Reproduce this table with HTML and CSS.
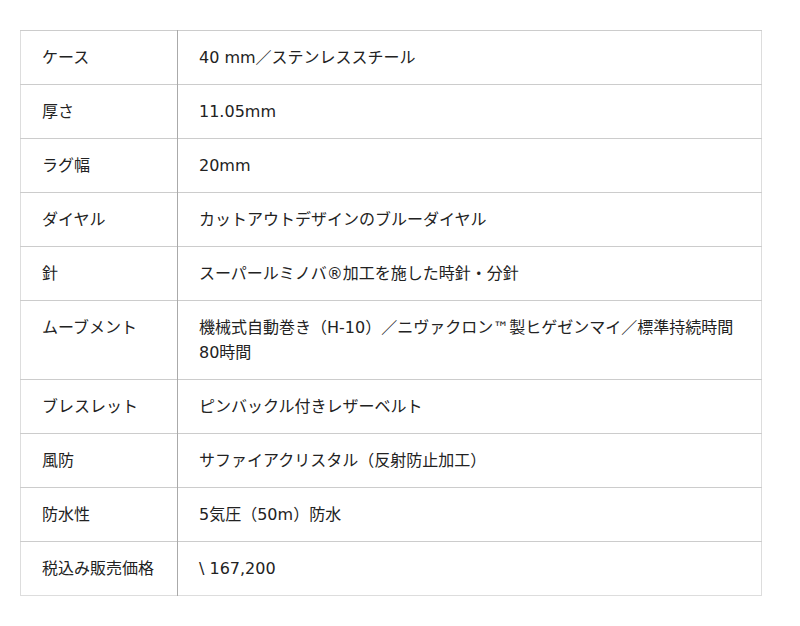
FILE: index.html
```html
<!DOCTYPE html>
<html lang="ja">
<head>
<meta charset="utf-8">
<link rel="stylesheet" href="styles.css">
</head>
<body>
<div class="wrap">
<table class="spec">
<tbody>
<tr><th>ケース</th><td>40 mm／ステンレススチール</td></tr>
<tr><th>厚さ</th><td>11.05mm</td></tr>
<tr><th>ラグ幅</th><td>20mm</td></tr>
<tr><th>ダイヤル</th><td>カットアウトデザインのブルーダイヤル</td></tr>
<tr><th>針</th><td>スーパールミノバ®加工を施した時針・分針</td></tr>
<tr><th>ムーブメント</th><td>機械式自動巻き（H-10）／ニヴァクロン™製ヒゲゼンマイ／標準持続時間80時間</td></tr>
<tr><th>ブレスレット</th><td>ピンバックル付きレザーベルト</td></tr>
<tr><th>風防</th><td>サファイアクリスタル（反射防止加工）</td></tr>
<tr><th>防水性</th><td>5気圧（50m）防水</td></tr>
<tr><th>税込み販売価格</th><td>\ 167,200</td></tr>
</tbody>
</table>
</div>
</body>
</html>
```

FILE: styles.css
```css
html, body {
  margin: 0;
  padding: 0;
  background: #fff;
}
.wrap {
  padding: 30px 38px 0 20px;
}
.spec {
  width: 742px;
  border-collapse: collapse;
  border: 1px solid #ddd;
  font-family: "DejaVu Sans", "Noto Sans CJK JP", sans-serif;
  font-size: 16px;
  line-height: 25px;
  color: #222;
}
.spec th,
.spec td {
  text-align: left;
  font-weight: normal;
  vertical-align: top;
  padding: 14px 20px;
  border-top: 1px solid #ccc;
}
.spec th {
  width: 115px;
  padding-left: 21px;
  border-right: 1px solid #aaa;
}
.spec td {
  padding-left: 21px;
  padding-right: 20px;
}
```
